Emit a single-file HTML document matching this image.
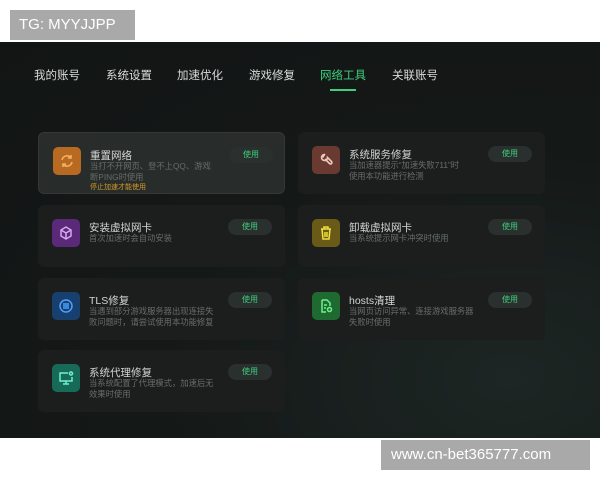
<!DOCTYPE html>
<html><head><meta charset="utf-8"><style>
*{margin:0;padding:0;box-sizing:border-box}
body{width:600px;height:480px;background:#fff;position:relative;overflow:hidden;font-family:"Liberation Sans","Noto Sans CJK SC",sans-serif}
.tg{position:absolute;left:10px;top:10px;width:125px;height:30px;background:#a9a9a9;color:#fff;font-size:15px;line-height:30px;padding-left:9px}
.url{position:absolute;left:381px;top:440px;width:209px;height:30px;background:#a9a9a9;color:#fff;font-size:15px;line-height:30px;padding-left:10px}
.main{position:absolute;left:0;top:42px;width:600px;height:396px;background:radial-gradient(ellipse at 85% 85%,#1d2624 0%,#141817 50%,#121514 100%)}
.nav{position:absolute;top:25px;font-size:11.5px;color:#d8dcda}
.nav.on{color:#3ecf7e}
.ul{position:absolute;left:330px;top:47px;width:26px;height:2px;background:#3ecf7e}
.card{position:absolute;width:247px;height:62px;background:#1b1e1d;border-radius:6px}
.card.hl{background:#282c2a;border:1px solid #333836}
.ic{position:absolute;left:14px;top:14px;width:28px;height:28px;border-radius:5px;display:flex;align-items:center;justify-content:center}
.t{position:absolute;left:51px;top:15px;font-size:10.5px;color:#d2d5d3}
.d{position:absolute;left:51px;top:28px;font-size:8.3px;line-height:11px;color:#676d6a;width:135px}
.w{position:absolute;left:51px;top:49px;font-size:7px;color:#d59a2a}
.b{position:absolute;left:190px;top:14px;width:44px;height:16px;border-radius:8px;background:#2a302d;color:#3ecf7e;font-size:8px;text-align:center;line-height:16px}
</style></head><body>
<div class="tg">TG: MYYJJPP</div>
<div class="main">
<div class="nav" style="left:34px">我的账号</div>
<div class="nav" style="left:106px">系统设置</div>
<div class="nav" style="left:177px">加速优化</div>
<div class="nav" style="left:249px">游戏修复</div>
<div class="nav on" style="left:320px">网络工具</div>
<div class="nav" style="left:392px">关联账号</div>
<div class="ul"></div>

<div class="card hl" style="left:38px;top:90px"><div class="ic" style="background:#b86a22"><svg width="16" height="16" viewBox="0 0 16 16" fill="none" stroke="#f2b060" stroke-width="1.6"><path d="M3 7a5 5 0 0 1 9-2M13 9a5 5 0 0 1-9 2M12 2v3H9M4 14v-3h3"/></svg></div><div class="t">重置网络</div><div class="d">当打不开网页、登不上QQ、游戏<br>断PING时使用</div><div class="w">停止加速才能使用</div><div class="b">使用</div></div>
<div class="card" style="left:298px;top:90px"><div class="ic" style="background:#6a3a30"><svg width="16" height="16" viewBox="0 0 16 16" fill="none" stroke="#f0c8c0" stroke-width="1.6" stroke-linecap="round"><path d="M6.5 2.5a3 3 0 1 0 3 3l4 4a1.4 1.4 0 0 1-2 2l-4-4"/><path d="M6.5 2.5L5 5"/></svg></div><div class="t">系统服务修复</div><div class="d">当加速器提示“加速失败711”时<br>使用本功能进行检测</div><div class="b">使用</div></div>
<div class="card" style="left:38px;top:163px"><div class="ic" style="background:#5a2a78"><svg width="16" height="16" viewBox="0 0 16 16" fill="none" stroke="#d8a8f0" stroke-width="1.5"><path d="M8 2l5 3v6l-5 3-5-3V5zM3 5l5 3 5-3M8 8v6"/></svg></div><div class="t">安装虚拟网卡</div><div class="d">首次加速时会自动安装</div><div class="b">使用</div></div>
<div class="card" style="left:298px;top:163px"><div class="ic" style="background:#6a5a18"><svg width="16" height="16" viewBox="0 0 16 16" fill="none" stroke="#f0e040" stroke-width="1.5"><path d="M3 4h10M6 4V2h4v2M4 4l1 10h6l1-10M7 7v5M9 7v5"/></svg></div><div class="t">卸载虚拟网卡</div><div class="d">当系统提示网卡冲突时使用</div><div class="b">使用</div></div>
<div class="card" style="left:38px;top:236px"><div class="ic" style="background:#17406e"><svg width="16" height="16" viewBox="0 0 16 16" fill="none" stroke="#4aa0ff" stroke-width="1.5"><circle cx="8" cy="8" r="6"/><path d="M5 6h6M5 8h6M5 10h6"/></svg></div><div class="t">TLS修复</div><div class="d">当遇到部分游戏服务器出现连接失<br>败问题时，请尝试使用本功能修复</div><div class="b">使用</div></div>
<div class="card" style="left:298px;top:236px"><div class="ic" style="background:#1e6a30"><svg width="16" height="16" viewBox="0 0 16 16" fill="none" stroke="#6ef08a" stroke-width="1.5"><path d="M4 2h5l3 3v3M4 2v12h4M6 7h3M6 10h2"/><circle cx="11.5" cy="11.5" r="2"/></svg></div><div class="t">hosts清理</div><div class="d">当网页访问异常、连接游戏服务器<br>失败时使用</div><div class="b">使用</div></div>
<div class="card" style="left:38px;top:308px"><div class="ic" style="background:#176a58"><svg width="16" height="16" viewBox="0 0 16 16" fill="none" stroke="#6ef0d0" stroke-width="1.5"><path d="M10 3H2v8h12V7M8 11v3M5 14h6"/><circle cx="13" cy="3.5" r="1.5"/></svg></div><div class="t">系统代理修复</div><div class="d">当系统配置了代理模式，加速后无<br>效果时使用</div><div class="b">使用</div></div>
</div>
<div class="url">www.cn-bet365777.com</div>
</body></html>
